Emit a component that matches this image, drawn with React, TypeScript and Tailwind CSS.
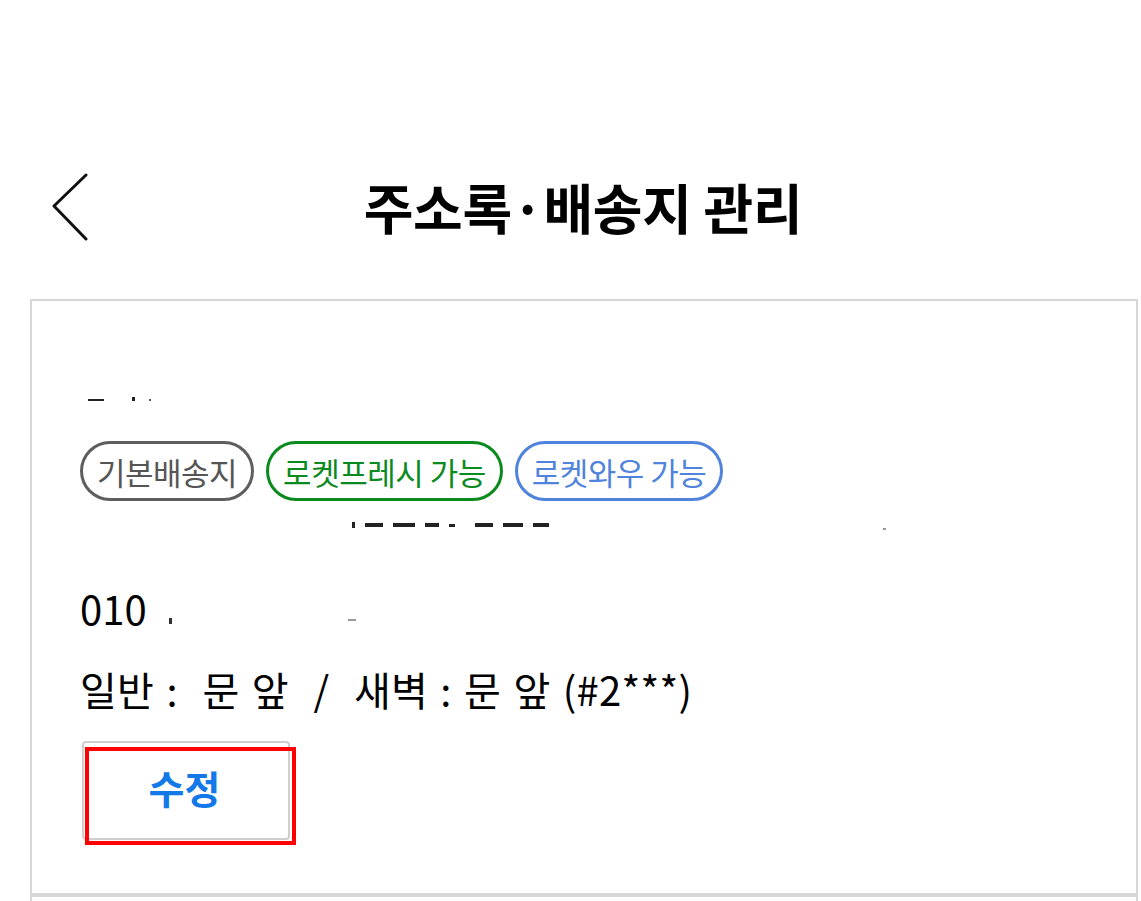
import React from "react";

const font = { fontFamily: '"Noto Sans CJK KR", "Noto Sans", sans-serif' };

const Badge: React.FC<{ label: string; className: string }> = ({ label, className }) => (
  <span
    className={`inline-flex h-[60px] items-center rounded-full border-[3px] px-[14px] text-[31px] leading-none tracking-[-0.5px] ${className}`}
  >
    {label}
  </span>
);

// 가려진 글자 조각 (redacted text remnants)
const Mark: React.FC<{ className: string }> = ({ className }) => <span className={`block ${className}`} />;

export default function App() {
  return (
    <div className="h-[901px] w-[1141px] overflow-hidden bg-white text-black" style={font}>
      <div className="h-[140px]" />
      <header className="grid h-[134px] grid-cols-[1fr_auto_1fr] items-center">
        <div className="pl-[50px]">
          <svg width="40" height="68" viewBox="0 0 40 68" fill="none">
            <path d="M36 2 L4 33 L36 66" stroke="#111" strokeWidth="3" strokeLinecap="round" strokeLinejoin="round" />
          </svg>
        </div>
        <h1 className="ml-[25px] text-[54px] font-bold leading-none tracking-[-0.3px]">주소록·배송지 관리</h1>
        <div />
      </header>

      <section className="ml-[30px] mt-[25px] flex h-[596px] w-[1108px] flex-col border-[2px] border-[#d6d6d6] pl-[48px]">
        <div className="flex h-[140px] items-start gap-[28px] pl-[8px] pt-[96px]">
          <Mark className="mt-[2px] h-[2px] w-[16px] bg-[#222]" />
          <Mark className="h-[4px] w-[3px] bg-[#222]" />
          <Mark className="-ml-[14px] mt-[2px] h-[2px] w-[2px] bg-[#555]" />
        </div>
        <div className="flex gap-[12px]">
          <Badge label="기본배송지" className="border-[#5e5e5e] text-[#555]" />
          <Badge label="로켓프레시 가능" className="border-[#0b8a1f] text-[#0b8a1f]" />
          <Badge label="로켓와우 가능" className="border-[#4f83dc] text-[#4f83dc]" />
        </div>
        <div className="flex h-[72px] items-start gap-[10px] pl-[272px] pt-[21px]">
          <Mark className="h-[6px] w-[3px] bg-[#222]" />
          <Mark className="mt-[1px] h-[4px] w-[18px] bg-[#222]" />
          <Mark className="mt-[1px] h-[4px] w-[22px] bg-[#222]" />
          <Mark className="mt-[1px] h-[4px] w-[14px] bg-[#222]" />
          <Mark className="mt-[2px] h-[3px] w-[6px] bg-[#222]" />
          <Mark className="ml-[10px] mt-[1px] h-[4px] w-[18px] bg-[#222]" />
          <Mark className="mt-[1px] h-[4px] w-[20px] bg-[#222]" />
          <Mark className="mt-[1px] h-[4px] w-[16px] bg-[#222]" />
          <Mark className="ml-[324px] mt-[6px] h-[2px] w-[3px] bg-[#999]" />
        </div>
        <div className="flex h-[70px] items-center text-[40px] leading-none">
          <span>010</span>
          <Mark className="ml-[22px] mt-[26px] h-[6px] w-[3px] bg-[#333]" />
          <Mark className="ml-[176px] mt-[24px] h-[2px] w-[8px] bg-[#999]" />
        </div>
        <div className="flex h-[92px] items-center whitespace-pre text-[40px] leading-none tracking-[0.3px] [word-spacing:3px]">
          {"일반 :  문 앞  /  새벽 : 문 앞 (#2***)"}
        </div>
        <div className="relative ml-[2px] mt-[6px] h-[99px] w-[208px]">
          <div className="absolute inset-0 rounded-[4px] border-[2px] border-[#cfcfcf]" />
          <div className="absolute left-[3px] top-[6px] flex h-[98px] w-[211px] items-center justify-center border-[4px] border-[#ff0000] pb-[18px] text-[39px] font-bold text-[#1479e8]">
            <span className="-ml-[12px]">수정</span>
          </div>
        </div>
      </section>
      <div className="ml-[30px] h-[40px] w-[1108px] border-x-[2px] border-t-[2px] border-[#d6d6d6]" />
    </div>
  );
}
